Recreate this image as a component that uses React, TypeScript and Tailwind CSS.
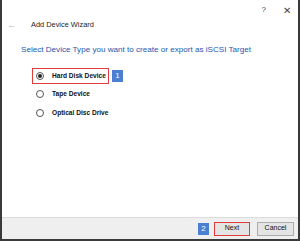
import React from "react";

const options = ["Hard Disk Device", "Tape Device", "Optical Disc Drive"];

function Badge({ n }: { n: string }) {
	return (
		<span className="flex h-[12px] w-[11px] items-center justify-center bg-[#4a7fd4] text-[8px] leading-none text-white">
			{n}
		</span>
	);
}

export default function App() {
	return (
		<div
			className="flex h-[241px] w-[300px] flex-col border-b-2 border-l-2 border-r-2 border-[#3a3a3a] bg-white"
			style={{ fontFamily: '"Liberation Sans", Arial, sans-serif' }}
		>
			{/* title bar */}
			<div className="flex h-[16px] items-end justify-end gap-[17px] pr-[7px] text-[8px] text-[#444]">
				<span>?</span>
				<span className="text-[10px] leading-none">✕</span>
			</div>

			<div className="mt-[4px] flex h-[10px] items-center gap-[15px] pl-[5px]">
				<span className="text-[9px] leading-none text-[#bbb]">←</span>
				<span className="text-[7.4px] leading-none text-[#222]">Add Device Wizard</span>
			</div>

			<div className="mt-[16px] whitespace-nowrap pl-[19px] text-[8.1px] leading-none text-[#2458b0]">
				Select Device Type you want to create or export as iSCSI Target
			</div>

			<div className="mt-[13px] flex flex-col gap-[1px] pl-[30px]">
				{options.map((o, i) => (
					<div key={o} className="flex h-[17.5px] items-center">
						<div
							className={
								"flex h-[16px] items-center gap-[8px] pl-[3px] pr-[2px] " +
								(i === 0 ? "border-[1.5px] border-[#e03c3c]" : "border-[1.5px] border-transparent")
							}
						>
							<span className="flex h-[8px] w-[8px] items-center justify-center rounded-full border border-[#555] bg-white">
								{i === 0 && <span className="h-[4px] w-[4px] rounded-full bg-[#222]" />}
							</span>
							<span className="text-[6.6px] font-bold text-[#111]">{o}</span>
						</div>
						{i === 0 && (
							<div className="ml-[3px]">
								<Badge n="1" />
							</div>
						)}
					</div>
				))}
			</div>

			<div className="flex-1" />

			{/* footer */}
			<div className="flex h-[22px] items-center justify-end gap-[4px] border-t border-[#dcdcdc] bg-[#efefef] pr-[4px]">
				<Badge n="2" />
				<button className="ml-[1px] flex h-[14px] w-[36px] items-center justify-center border-[1.5px] border-[#e03c3c] bg-[#e4e4e4] text-[7px] text-[#111]">
					Next
				</button>
				<button className="ml-[3px] flex h-[14px] w-[37px] items-center justify-center border border-[#adadad] bg-[#e4e4e4] text-[7px] text-[#111]">
					Cancel
				</button>
			</div>
		</div>
	);
}
